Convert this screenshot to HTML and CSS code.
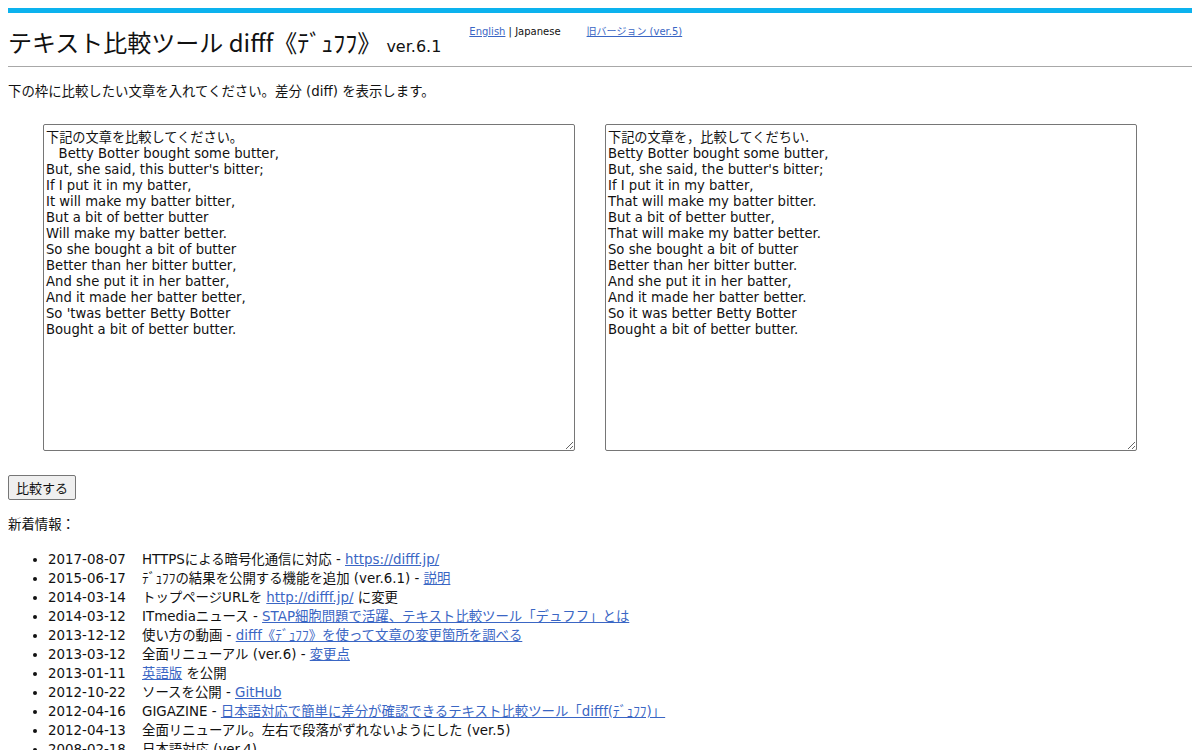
FILE: index.html
```html
<!DOCTYPE html>
<html lang="ja">
<head>
  <meta charset="UTF-8" />
  <title>テキスト比較ツール difff《ﾃﾞｭﾌﾌ》</title>
  <link rel="stylesheet" href="styles.css">
</head>
<body>
  <div class="topbar"></div>

  <div class="header">
    <h1>テキスト比較ツール difff《ﾃﾞｭﾌﾌ》<span class="ver">ver.6.1</span></h1>
    <div class="lang"><a href="#">English</a> | Japanese</div>
    <div class="old"><a href="#">旧バージョン (ver.5)</a></div>
  </div>
  <hr>

  <p class="lead">下の枠に比較したい文章を入れてください。差分 (diff) を表示します。</p>

  <form class="compare">
    <div class="boxes">
      <textarea name="sequenceA">下記の文章を比較してください。
   Betty Botter bought some butter,
But, she said, this butter's bitter;
If I put it in my batter,
It will make my batter bitter,
But a bit of better butter
Will make my batter better.
So she bought a bit of butter
Better than her bitter butter,
And she put it in her batter,
And it made her batter better,
So 'twas better Betty Botter
Bought a bit of better butter.</textarea>
      <textarea name="sequenceB">下記の文章を，比較してくだちい.
Betty Botter bought some butter,
But, she said, the butter's bitter;
If I put it in my batter,
That will make my batter bitter.
But a bit of better butter,
That will make my batter better.
So she bought a bit of butter
Better than her bitter butter.
And she put it in her batter,
And it made her batter better.
So it was better Betty Botter
Bought a bit of better butter.</textarea>
    </div>
    <button type="submit">比較する</button>
  </form>

  <p class="news-title">新着情報：</p>
  <ul class="news">
    <li><span class="date">2017-08-07</span>HTTPSによる暗号化通信に対応 - <a href="#">https://difff.jp/</a></li>
    <li><span class="date">2015-06-17</span>ﾃﾞｭﾌﾌの結果を公開する機能を追加 (ver.6.1) - <a href="#">説明</a></li>
    <li><span class="date">2014-03-14</span>トップページURLを <a href="#">http://difff.jp/</a> に変更</li>
    <li><span class="date">2014-03-12</span>ITmediaニュース - <a href="#">STAP細胞問題で活躍、テキスト比較ツール「デュフフ」とは</a></li>
    <li><span class="date">2013-12-12</span>使い方の動画 - <a href="#">difff《ﾃﾞｭﾌﾌ》を使って文章の変更箇所を調べる</a></li>
    <li><span class="date">2013-03-12</span>全面リニューアル (ver.6) - <a href="#">変更点</a></li>
    <li><span class="date">2013-01-11</span><a href="#">英語版</a> を公開</li>
    <li><span class="date">2012-10-22</span>ソースを公開 - <a href="#">GitHub</a></li>
    <li><span class="date">2012-04-16</span>GIGAZINE - <a href="#">日本語対応で簡単に差分が確認できるテキスト比較ツール「difff(ﾃﾞｭﾌﾌ)」</a></li>
    <li><span class="date">2012-04-13</span>全面リニューアル。左右で段落がずれないようにした (ver.5)</li>
    <li><span class="date">2008-02-18</span>日本語対応 (ver.4)</li>
  </ul>
</body>
</html>
```

FILE: styles.css
```css
body {
  margin: 8px;
  font-family: 'DejaVu Sans', 'Noto Sans CJK JP', sans-serif;
  font-size: 13.4px;
  color: #111;
  background: #fff;
}

a {
  color: #3a66c4;
}

.topbar {
  height: 5px;
  background: #0cb2ee;
}

.header {
  display: flex;
  align-items: flex-start;
  padding-top: 14px;
  height: 39px;
}

.header h1 {
  margin: 0;
  font-size: 24px;
  font-weight: normal;
  line-height: 30px;
  font-family: 'Noto Sans CJK JP', 'DejaVu Sans', sans-serif;
  white-space: nowrap;
}

.header .ver {
  font-size: 16px;
  margin-left: 5px;
  font-family: 'DejaVu Sans', sans-serif;
}

.lang,
.old {
  font-size: 10px;
  line-height: 14px;
  margin-top: -2px;
}

.lang {
  margin-left: 28px;
}

.old {
  margin-left: 26px;
}

hr {
  margin: 0;
  border: none;
  border-top: 1px solid #a8a8a8;
}

.lead {
  margin: 16px 0 0;
  line-height: 18px;
}

.compare {
  margin-top: 23px;
}

.boxes {
  display: flex;
  gap: 30px;
  padding-left: 35px;
}

.boxes textarea {
  width: 532px;
  height: 327px;
  box-sizing: border-box;
  margin: 0;
  padding: 5px 2px 2px;
  font-family: 'DejaVu Sans', 'Noto Sans CJK JP', sans-serif;
  font-size: 13.2px;
  line-height: 16px;
  color: #111;
  border: 1px solid #767676;
  border-radius: 2px;
  resize: both;
}

.compare button {
  display: block;
  margin-top: 24px;
  padding: 2px 7px;
  height: 25px;
  font-family: 'Noto Sans CJK JP', sans-serif;
  font-size: 13px;
  color: #111;
  background: #efefef;
  border: 1px solid #767676;
  border-radius: 2px;
}

.news-title {
  margin: 16px 0 0;
  line-height: 18px;
}

.news {
  margin: 16px 0 0;
  padding-left: 40px;
}

.news li {
  line-height: 19px;
}

.news .date {
  display: inline-block;
  width: 94px;
}
```
